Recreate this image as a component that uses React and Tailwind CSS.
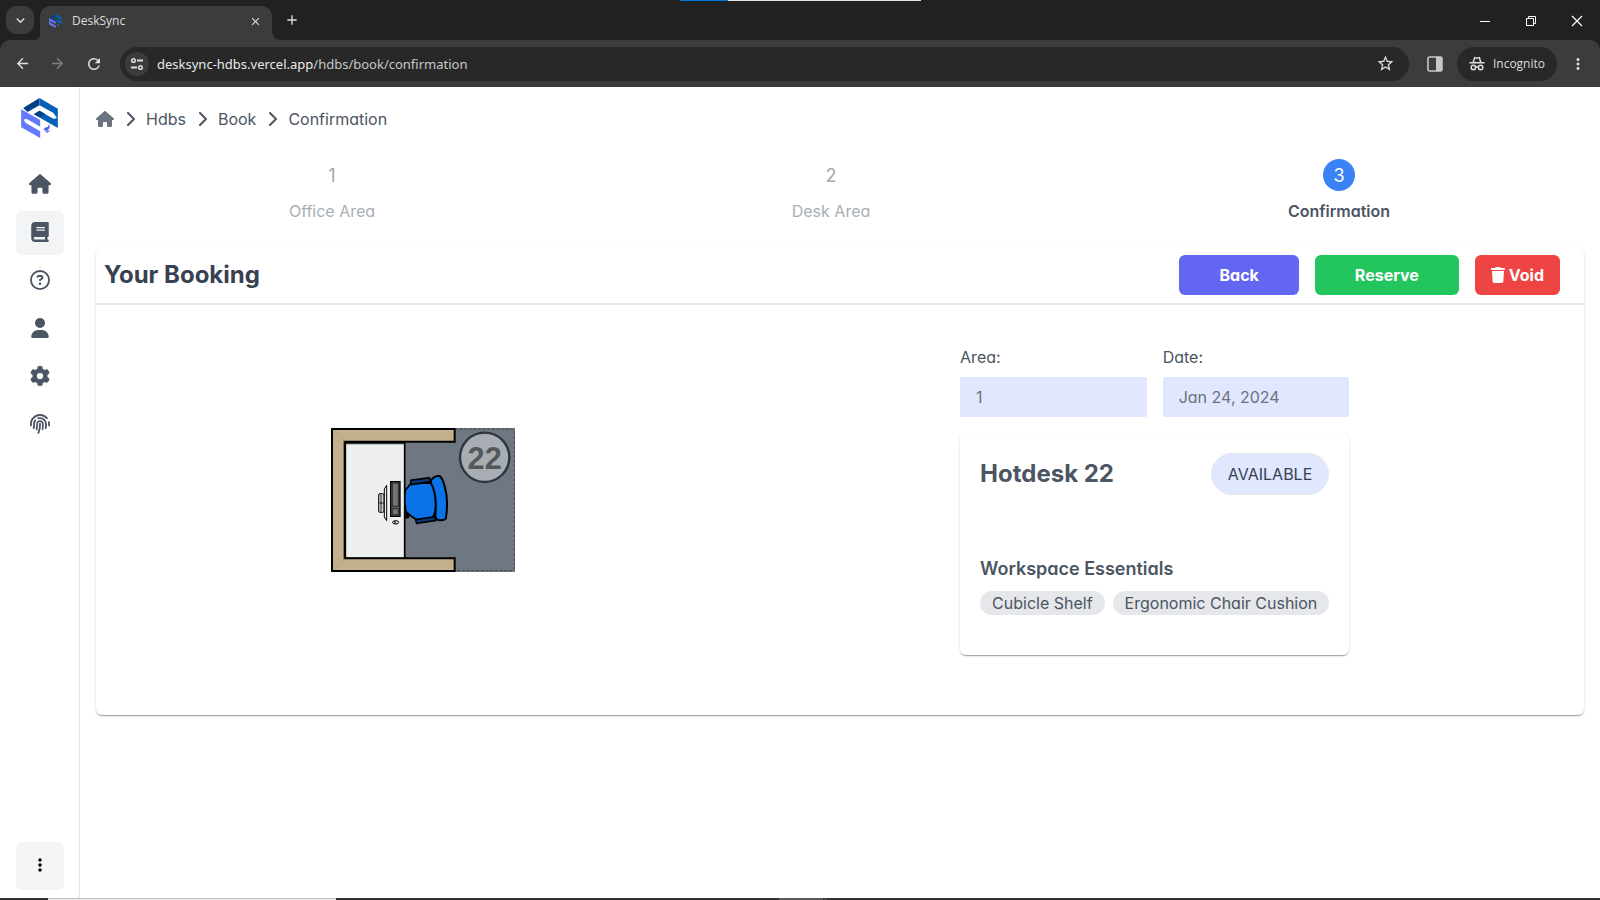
import React from "react";
import {
  FaHouse,
  FaBook,
  FaRegCircleQuestion,
  FaUser,
  FaGear,
  FaFingerprint,
  FaEllipsisVertical,
  FaChevronRight,
  FaTrash,
} from "react-icons/fa6";
import {
  MdArrowBack,
  MdArrowForward,
  MdRefresh,
  MdStarBorder,
  MdMoreVert,
  MdClose,
  MdAdd,
  MdKeyboardArrowDown,
} from "react-icons/md";

function Logo({ className }) {
  return (
    <svg className={className} viewBox="65 293 110 120" aria-hidden="true">
      <path fill="#033f86" d="M71 323 120 293V315L84 335Z" />
      <path fill="#0560b8" d="M120 293 175 325V383L158 373 103 342 120 331 156 352 164 356 172 352 164 341 162 338 120 315Z" />
      <path fill="#033f86" d="M103 342 120 331 137 341 120 350Z" />
      <path fill="#6579ff" d="M65 327 122 359V379L87 359 80 355 73 358 78 367 122 393V413L65 381Z" />
      <path fill="#4a63e0" d="M150 370V384L144 389H132L136 382 144 380Z" />
      <path stroke="#4a63e0" strokeWidth="3" fill="none" d="M143 386V398M135 392H151" />
    </svg>
  );
}

function TuneIcon() {
  return (
    <svg width="14" height="14" viewBox="0 0 14 14" fill="none" stroke="#dcdcdc" strokeWidth="2" aria-hidden="true">
      <circle cx="3.5" cy="3.5" r="1.8" strokeWidth="1.5" />
      <path d="M7 3.5h6M1 10.5h6" />
      <circle cx="10.5" cy="10.5" r="1.8" strokeWidth="1.5" />
    </svg>
  );
}

function IncognitoIcon() {
  return (
    <svg width="16" height="16" viewBox="0 0 16 16" aria-hidden="true">
      <path fill="#dedede" d="M3.6 6 4.9 1.6Q5.2.7 6.1.9L8 1.5 9.9.9Q10.8.7 11.1 1.6L12.4 6H15.5V7.6H.5V6ZM5.2 6H10.8L9.9 2.6 8 3.1 6.1 2.6Z" />
      <circle cx="4.4" cy="11.5" r="2.2" fill="none" stroke="#dedede" strokeWidth="1.5" />
      <circle cx="11.6" cy="11.5" r="2.2" fill="none" stroke="#dedede" strokeWidth="1.5" />
      <path d="M6.5 11.2Q8 10.3 9.5 11.2" fill="none" stroke="#dedede" strokeWidth="1.4" />
    </svg>
  );
}

function BrowserChrome() {
  return (
    <header className="relative bg-[#202221] font-['Open_Sans','Noto_Sans',sans-serif] text-[#dedede]">
      <div className="absolute left-[680px] top-0 flex h-px w-[241px]">
        <span className="w-12 bg-[#0078d7]" />
        <span className="flex-1 bg-[#e3e6e3]" />
      </div>
      <div className="flex h-10 items-end pl-1.5">
        <button aria-label="Search tabs" className="mb-1.5 flex h-7 w-7 items-center justify-center rounded-[10px] bg-[#3c3c3c]">
          <MdKeyboardArrowDown size={17} />
        </button>
        <div className="flex items-end">
          <svg width="6" height="6" viewBox="0 0 6 6" aria-hidden="true">
            <path d="M6 0V6H0Q6 6 6 0Z" fill="#3c3c3c" />
          </svg>
          <div className="flex h-[34px] w-[232px] items-center rounded-t-[10px] bg-[#3c3c3c] pl-[9px] pr-2.5 pb-1">
            <Logo className="h-[14px] w-[13px]" />
            <span className="ml-2.5 flex-1 text-[12px] leading-4">DeskSync</span>
            <button aria-label="Close tab">
              <MdClose size={13} />
            </button>
          </div>
          <svg width="10" height="10" viewBox="0 0 10 10" aria-hidden="true">
            <path d="M0 0V10H10Q0 10 0 0Z" fill="#3c3c3c" />
          </svg>
        </div>
        <button aria-label="New tab" className="mb-3 ml-0.5">
          <MdAdd size={16} />
        </button>
        <div className="mb-[13px] ml-auto flex items-center gap-[34px] pr-[17px] text-white">
          <button aria-label="Minimize">
            <svg width="12" height="12" viewBox="0 0 12 12" stroke="currentColor" aria-hidden="true">
              <path d="M1 6.5H11" />
            </svg>
          </button>
          <button aria-label="Restore">
            <svg width="12" height="12" viewBox="0 0 12 12" fill="none" stroke="currentColor" aria-hidden="true">
              <path d="M1.5 3.5h7v7h-7zM3.5 3.5v-2h7v7h-2" />
            </svg>
          </button>
          <button aria-label="Close window">
            <svg width="12" height="12" viewBox="0 0 12 12" stroke="currentColor" strokeWidth="1.2" aria-hidden="true">
              <path d="M1 1 11 11M11 1 1 11" />
            </svg>
          </button>
        </div>
      </div>
      <div className="flex h-[47px] items-center rounded-t-[10px] bg-[#3c3c3c] pl-3.5 pr-[13px]">
        <button aria-label="Back to previous page">
          <MdArrowBack size={17} />
        </button>
        <button aria-label="Forward" className="ml-[18px] text-[#7f7f7f]">
          <MdArrowForward size={17} />
        </button>
        <button aria-label="Reload" className="ml-[19px]">
          <MdRefresh size={18} />
        </button>
        <div className="ml-[17px] flex h-[34px] flex-1 items-center rounded-full bg-[#282828] pl-[5px] pr-3.5">
          <button aria-label="Site information" className="flex h-6 w-6 items-center justify-center rounded-full bg-[#3c3c3c]">
            <TuneIcon />
          </button>
          <p className="ml-2 flex-1 font-['Noto_Sans','Open_Sans',sans-serif] text-[13px] leading-5 text-[#c7c7c7]">
            <span className="text-[#e8e8e8]">desksync-hdbs.vercel.app</span>/hdbs/book/confirmation
          </p>
          <button aria-label="Bookmark this tab">
            <MdStarBorder size={19} />
          </button>
        </div>
        <button aria-label="Side panel" className="ml-[18px]">
          <svg width="16" height="16" viewBox="0 0 16 16" aria-hidden="true">
            <rect x="1" y="1" width="14" height="14" rx="1.5" fill="none" stroke="#c7c7c7" strokeWidth="1.6" />
            <path d="M9 1h6v14H9z" fill="#c7c7c7" />
          </svg>
        </button>
        <div className="ml-3.5 flex h-[34px] items-center gap-2 rounded-full bg-[#282828] pl-3 pr-3 text-[12px]">
          <IncognitoIcon />
          Incognito
        </div>
        <button aria-label="Browser menu" className="ml-3">
          <MdMoreVert size={18} />
        </button>
      </div>
    </header>
  );
}

const NAV = [
  { label: "Home", Icon: FaHouse, iconClass: "h-5 w-[22px]" },
  { label: "Book", Icon: FaBook, iconClass: "h-5 w-[18px]", active: true },
  { label: "Help", Icon: FaRegCircleQuestion, iconClass: "h-5 w-5" },
  { label: "Profile", Icon: FaUser, iconClass: "h-5 w-[18px]" },
  { label: "Settings", Icon: FaGear, iconClass: "h-5 w-5" },
  { label: "Privacy", Icon: FaFingerprint, iconClass: "h-5 w-5" },
];

function Sidebar() {
  return (
    <aside className="flex w-20 shrink-0 flex-col items-center border-r border-[#e5e7eb] pb-2 pt-[11px]">
      <a href="#home" aria-label="DeskSync">
        <Logo className="h-10 w-[37px]" />
      </a>
      <nav className="mt-[25px] flex flex-col gap-1">
        {NAV.map(({ label, Icon, iconClass, active }) => (
          <a
            key={label}
            href={"#" + label.toLowerCase()}
            aria-label={label}
            className={
              active
                ? "flex h-11 w-12 items-center justify-center rounded-md bg-[#f3f4f6] pb-0.5 text-[#4b5563]"
                : "flex h-11 w-12 items-center justify-center rounded-md pb-0.5 text-[#4b5563]"
            }
          >
            <Icon className={iconClass} />
          </a>
        ))}
      </nav>
      <button aria-label="More" className="mt-auto flex h-12 w-12 items-center justify-center rounded-md bg-[#f3f4f6] pb-0.5 text-black">
        <FaEllipsisVertical size={16} />
      </button>
    </aside>
  );
}

function Breadcrumb() {
  return (
    <nav aria-label="Breadcrumb" className="flex h-6 items-center gap-[11px] text-base text-[#4b5563]">
      <a href="#home" aria-label="Home" className="text-[#6b7280]">
        <FaHouse className="h-4 w-[18px]" />
      </a>
      {["Hdbs", "Book", "Confirmation"].map((label) => (
        <span key={label} className="flex items-center gap-[11px]">
          <FaChevronRight className="h-4 w-2.5" />
          <a href={"#" + label.toLowerCase()}>{label}</a>
        </span>
      ))}
    </nav>
  );
}

function Steps() {
  const steps = ["Office Area", "Desk Area", "Confirmation"];
  return (
    <ol className="mt-7 grid grid-cols-[472fr_526fr_490fr]">
      {steps.map((label, i) => {
        const active = i === 2;
        return (
          <li key={label} className="flex flex-col items-center gap-2">
            <span
              className={
                active
                  ? "flex h-8 w-8 items-center justify-center rounded-full bg-[#3b82f6] pt-0.5 text-lg text-white"
                  : "flex h-8 w-8 items-center justify-center pt-0.5 text-lg text-[#a3a7ae]"
              }
            >
              {i + 1}
            </span>
            <span className={active ? "font-semibold text-[#4b5563]" : "text-[#a9aeb7]"}>{label}</span>
          </li>
        );
      })}
    </ol>
  );
}

function DeskDrawing() {
  return (
    <svg width="184" height="144" viewBox="33 39 552 432" role="img" aria-label="Hotdesk 22 floor plan">
      <rect x="33" y="39" width="552" height="432" fill="#6f7783" />
      <path d="M404 42H572Q583 42 583 54V455Q583 467 572 467H404" fill="none" stroke="#3f4650" strokeWidth="3" strokeDasharray="9 5" />
      <rect x="76" y="84" width="178" height="346" fill="#eeefef" stroke="#000" strokeWidth="5" />
      <path d="M78 88H252" stroke="#9a9a9a" strokeWidth="2" />
      <path d="M36 42H404V80H74V430H404V468H36Z" fill="#c5b08d" stroke="#000" strokeWidth="6" />
      <path d="M38 44 74 80M38 466 74 430" stroke="#a08c6a" strokeWidth="1.5" />
      <rect x="176" y="236" width="16" height="56" rx="4" fill="#d4d4d4" stroke="#000" strokeWidth="3" />
      <path d="M183 238V290M178 264H190" stroke="#000" strokeWidth="2.5" />
      <path d="M200 211 193 222V306L200 317Z" fill="#f3f3f3" stroke="#000" strokeWidth="3" />
      <rect x="212" y="200" width="28" height="104" fill="#5f5c5c" stroke="#000" strokeWidth="4" />
      <path d="M217 205H235V274H217ZM217 281H235V299H217Z" fill="#777373" stroke="#222" strokeWidth="2.5" />
      <ellipse cx="227" cy="322" rx="9" ry="5" fill="#ddd" stroke="#000" strokeWidth="3" />
      <path d="M225 318V326" stroke="#000" strokeWidth="3" />
      <path d="M256 290H268V308L256 312Z" fill="#000" />
      <path d="M256 226 272 206 334 204Q350 216 348 262 347 300 334 311L290 314Q272 304 258 290 252 258 256 226Z" fill="#0b73e8" stroke="#000" strokeWidth="5" />
      <path d="M272 196 328 188 331 200 274 209Z" fill="#083a80" stroke="#000" strokeWidth="5" />
      <path d="M287 314 345 305 347 317 290 325Z" fill="#083a80" stroke="#000" strokeWidth="5" />
      <path d="M333 196Q342 182 358 183 366 186 373 210 382 240 381 268 381 296 377 311 370 319 352 314 347 312 346 302 352 238 333 205Z" fill="#0b73e8" stroke="#000" strokeWidth="6" />
      <circle cx="494" cy="127" r="74" fill="#a7adb3" stroke="#2f353e" strokeWidth="7" />
      <text x="494" y="161" textAnchor="middle" fill="#55585b" className="font-['Liberation_Sans',sans-serif] text-[92px] font-bold">
        22
      </text>
    </svg>
  );
}

const CARD_SHADOW =
  "rounded-md bg-white shadow-[0_2px_1px_-1px_rgba(0,0,0,0.2),0_1px_1px_0_rgba(0,0,0,0.14),0_1px_3px_0_rgba(0,0,0,0.12)]";

function ReadOnlyField({ id, label, value }) {
  return (
    <div className="flex min-w-0 flex-1 flex-col gap-2">
      <label htmlFor={id}>{label}</label>
      <input id={id} value={value} readOnly size={1} className="h-10 w-full rounded-xs bg-[#e0e7ff] px-4 text-[#6b7280] outline-none" />
    </div>
  );
}

function BookingCard() {
  return (
    <section className={CARD_SHADOW + " mt-6"}>
      <div className="flex items-center gap-4 border-b-2 border-[#e5e7eb] py-2 pl-2 pr-6">
        <h1 className="mr-auto text-2xl font-bold text-[#374151]">Your Booking</h1>
        <button className="h-10 rounded-md bg-[#6366f1] px-10 font-bold text-white">Back</button>
        <button className="h-10 rounded-md bg-[#22c55e] px-10 font-bold text-white">Reserve</button>
        <button className="flex h-10 items-center gap-1 rounded-md bg-[#ef4444] px-4 font-bold text-white">
          <FaTrash size={16} className="w-3.5" />
          Void
        </button>
      </div>
      <div className="flex items-center justify-around px-3 pb-[60px] pt-10">
        <DeskDrawing />
        <div className="text-[#4b5563]">
          <div className="flex gap-4">
            <ReadOnlyField id="area" label="Area:" value="1" />
            <ReadOnlyField id="date" label="Date:" value="Jan 24, 2024" />
          </div>
          <div className={CARD_SHADOW + " mt-4 px-5 pb-10 pt-5"}>
            <div className="flex items-center justify-between">
              <h2 className="text-2xl font-bold">Hotdesk 22</h2>
              <span className="rounded-full border border-[#e5e7eb] bg-[#e0e7ff] px-4 py-2 text-[#374151]">AVAILABLE</span>
            </div>
            <h3 className="mt-[60px] text-lg font-semibold">Workspace Essentials</h3>
            <ul className="mt-2 flex gap-2">
              <li className="rounded-full bg-[#e5e7eb] px-3">Cubicle Shelf</li>
              <li className="rounded-full bg-[#e5e7eb] px-3">Ergonomic Chair Cushion</li>
            </ul>
          </div>
        </div>
      </div>
    </section>
  );
}

export default function App() {
  return (
    <div className="flex min-h-screen flex-col bg-white font-['Inter',sans-serif] text-base [font-feature-settings:'cv11']">
      <BrowserChrome />
      <div className="flex flex-1">
        <Sidebar />
        <main className="min-w-0 flex-1 px-4 pt-5">
          <Breadcrumb />
          <Steps />
          <BookingCard />
        </main>
      </div>
      <footer className="flex h-0.5 bg-[#333333]">
        <span className="ml-12 w-72 border-t border-[#bdbdbd] bg-[#ececec]" />
        <span className="ml-[443px] w-11 bg-[#5a5a5a]" />
        <span className="ml-px w-[3px] bg-[#4a4a4a]" />
      </footer>
    </div>
  );
}
